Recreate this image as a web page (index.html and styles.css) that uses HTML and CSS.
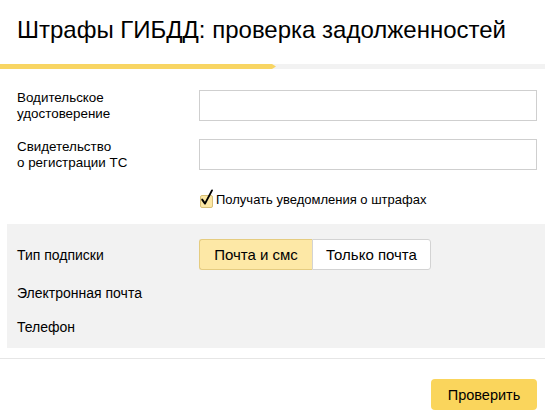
FILE: index.html
```html
<!DOCTYPE html>
<html lang="ru">
<head>
<meta charset="utf-8">
<title>Штрафы ГИБДД</title>
<link rel="stylesheet" href="styles.css">
</head>
<body>
<div class="header">
  <h1 class="title">Штрафы ГИБДД: проверка задолженностей</h1>
</div>
<div class="progress"><div class="progress-fill"></div></div>
<div class="form">
  <div class="label">Водительское<br>удостоверение</div>
  <input class="input" type="text">
  <div class="label">Свидетельство<br>о регистрации ТС</div>
  <input class="input" type="text">
  <label class="check-row">
    <span class="checkbox">
      <svg width="15" height="18" viewBox="0 0 15 18"><path d="M3.2 10.6 L6 14.6 L13 1.4" fill="none" stroke="#000" stroke-width="1.9" stroke-linecap="round" stroke-linejoin="round"/></svg>
    </span>
    <span class="check-text">Получать уведомления о штрафах</span>
  </label>
</div>
<div class="panel">
  <div class="panel-row row-type">
    <div class="panel-label">Тип подписки</div>
    <div class="segmented">
      <span class="seg seg-active">Почта и смс</span>
      <span class="seg">Только почта</span>
    </div>
  </div>
  <div class="panel-row"><div class="panel-label">Электронная почта</div></div>
  <div class="panel-row"><div class="panel-label">Телефон</div></div>
</div>
<div class="footer">
  <button class="submit" type="button">Проверить</button>
</div>
</body>
</html>
```
FILE: styles.css
```css
* { box-sizing: border-box; }
body {
  margin: 0;
  background: #fff;
  color: #000;
  font-family: "Liberation Sans", Arial, sans-serif;
  font-size: 13px;
  line-height: 16px;
}
.header { padding: 0 17px; }
.title {
  margin: 16px 0 20px;
  font-size: 24px;
  line-height: 28px;
  font-weight: normal;
}
.progress {
  height: 5px;
  background: #f2f2f2;
}
.progress-fill {
  width: 276px;
  height: 5px;
  background: #f8d563;
  clip-path: polygon(0 0, calc(100% - 4px) 0, 100% 50%, calc(100% - 4px) 100%, 0 100%);
}
.form {
  display: grid;
  grid-template-columns: 182px 1fr;
  row-gap: 17px;
  padding: 21px 8px 0 17px;
}
.label { font-size: 13.4px; }
.input {
  height: 31px;
  border: 1px solid #cfcfcf;
  border-radius: 0;
  background: #fff;
  font: inherit;
  margin: 0;
}
.check-row {
  grid-column: 2;
  display: flex;
  align-items: center;
  margin-top: 4px;
  height: 16px;
}
.checkbox {
  position: relative;
  width: 13px;
  height: 13px;
  margin-left: 1px;
  margin-top: 3px;
  border: 1px solid #d7bf78;
  border-radius: 2px;
  background: #fce7a4;
  flex: none;
}
.checkbox svg {
  position: absolute;
  left: -2px;
  top: -7px;
}
.check-text { margin-left: 3px; }
.panel {
  margin: 16px 0 0 7px;
  padding: 15px 0 13px 10px;
  background: #f2f2f2;
  display: flex;
  flex-direction: column;
  gap: 18px;
}
.panel-row {
  display: grid;
  grid-template-columns: 182px 1fr;
  align-items: center;
}
.row-type { margin-bottom: -3px; }
.panel-label { font-size: 14px; }
.segmented {
  display: flex;
  height: 31px;
}
.seg {
  display: flex;
  align-items: center;
  justify-content: center;
  font-size: 15px;
  border: 1px solid #d3d3d3;
  background: #fff;
  width: 119px;
  border-radius: 0 3px 3px 0;
}
.seg-active {
  width: 113px;
  background: #fde8a6;
  border-color: #e5cc80;
  border-right: none;
  border-radius: 3px 0 0 3px;
}
.footer {
  margin-top: 10px;
  border-top: 1px solid #e6e6e6;
  padding: 20px 8px 0 0;
  display: flex;
  justify-content: flex-end;
}
.submit {
  height: 31px;
  width: 106px;
  border: none;
  border-radius: 4px;
  background: #fad55c;
  font-family: inherit;
  font-size: 14.5px;
  color: #000;
  padding: 0;
}
```
